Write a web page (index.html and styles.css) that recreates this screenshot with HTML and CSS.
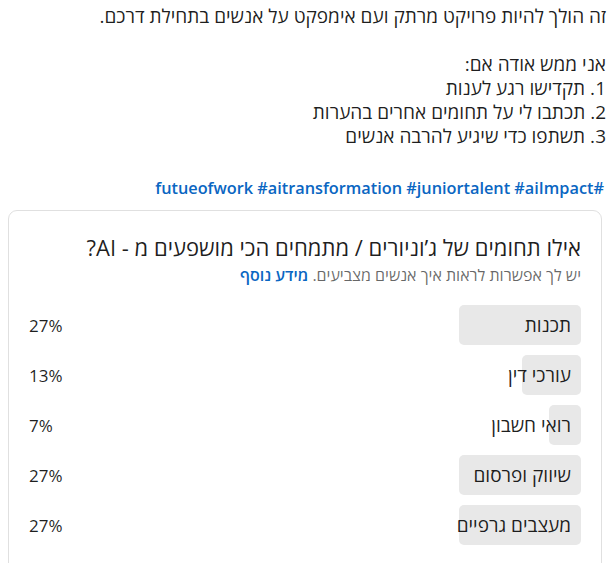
FILE: index.html
```html
<!DOCTYPE html>
<html lang="he" dir="rtl">
<head>
  <meta charset="UTF-8" />
  <title>Poll</title>
  <link rel="stylesheet" href="styles.css">
</head>
<body>

  <div class="post-text">
    <p>זה הולך להיות פרויקט מרתק ועם אימפקט על אנשים בתחילת דרכם.</p>
    <p class="blank"></p>
    <p>אני ממש אודה אם:</p>
    <p>1. תקדישו רגע לענות</p>
    <p>2. תכתבו לי על תחומים אחרים בהערות</p>
    <p>3. תשתפו כדי שיגיע להרבה אנשים</p>
    <p class="blank"></p>
    <p class="tags">#futueofwork #aitransformation #juniortalent #aiImpact</p>
  </div>

  <div class="poll">
    <h2 class="poll-title">אילו תחומים של ג’וניורים / מתמחים הכי מושפעים מ - AI?</h2>
    <p class="poll-sub">יש לך אפשרות לראות איך אנשים מצביעים. <a href="#">מידע נוסף</a></p>

    <div class="options">
      <div class="option">
        <div class="track"><span class="fill" style="width: 27%"></span><span class="label">תכנות</span></div>
        <span class="pct">27%</span>
      </div>
      <div class="option">
        <div class="track"><span class="fill" style="width: 13%"></span><span class="label">עורכי דין</span></div>
        <span class="pct">13%</span>
      </div>
      <div class="option">
        <div class="track"><span class="fill" style="width: 7%"></span><span class="label">רואי חשבון</span></div>
        <span class="pct">7%</span>
      </div>
      <div class="option">
        <div class="track"><span class="fill" style="width: 27%"></span><span class="label">שיווק ופרסום</span></div>
        <span class="pct">27%</span>
      </div>
      <div class="option">
        <div class="track"><span class="fill" style="width: 27%"></span><span class="label">מעצבים גרפיים</span></div>
        <span class="pct">27%</span>
      </div>
    </div>
  </div>

</body>
</html>
```

FILE: styles.css
```css
body {
  margin: 0;
  padding: 4px 3px 0 7px;
  background-color: #FFFFFF;
  color: rgba(0, 0, 0, 0.88);
  font-family: "Open Sans", "Liberation Sans", sans-serif;
}

.post-text {
  font-size: 19px;
  line-height: 24px;
}

.post-text p {
  margin: 0;
}

.blank {
  height: 24px;
}

.tags {
  margin-top: 4px !important;
  padding-right: 2px;
  color: #0A66C2;
  font-size: 16.3px;
  font-weight: 600;
}

.poll {
  margin: 10px 4px 0 1px;
  padding: 22px 20px 40px 20px;
  border: 1px solid #E0E0E0;
  border-radius: 9px;
}

.poll-title {
  margin: 0;
  font-size: 22px;
  font-weight: 400;
  line-height: 28px;
}

.poll-sub {
  margin: 4px 0 0;
  font-size: 16px;
  line-height: 20px;
  color: rgba(0, 0, 0, 0.6);
}

.poll-sub a {
  color: #0A66C2;
  font-weight: 600;
  text-decoration: none;
}

.options {
  margin-top: 20px;
  display: flex;
  flex-direction: column;
  gap: 10px;
}

.option {
  display: flex;
  align-items: center;
}

.track {
  flex: 1;
  display: grid;
  height: 40px;
}

.fill,
.label {
  grid-area: 1 / 1;
}

.fill {
  justify-self: start;
  background-color: #E8E8E8;
  border-radius: 5px;
}

.label {
  align-self: center;
  padding-right: 10px;
  font-size: 19px;
  white-space: nowrap;
}

.pct {
  width: 101px;
  direction: ltr;
  text-align: left;
  font-size: 17px;
}
```
